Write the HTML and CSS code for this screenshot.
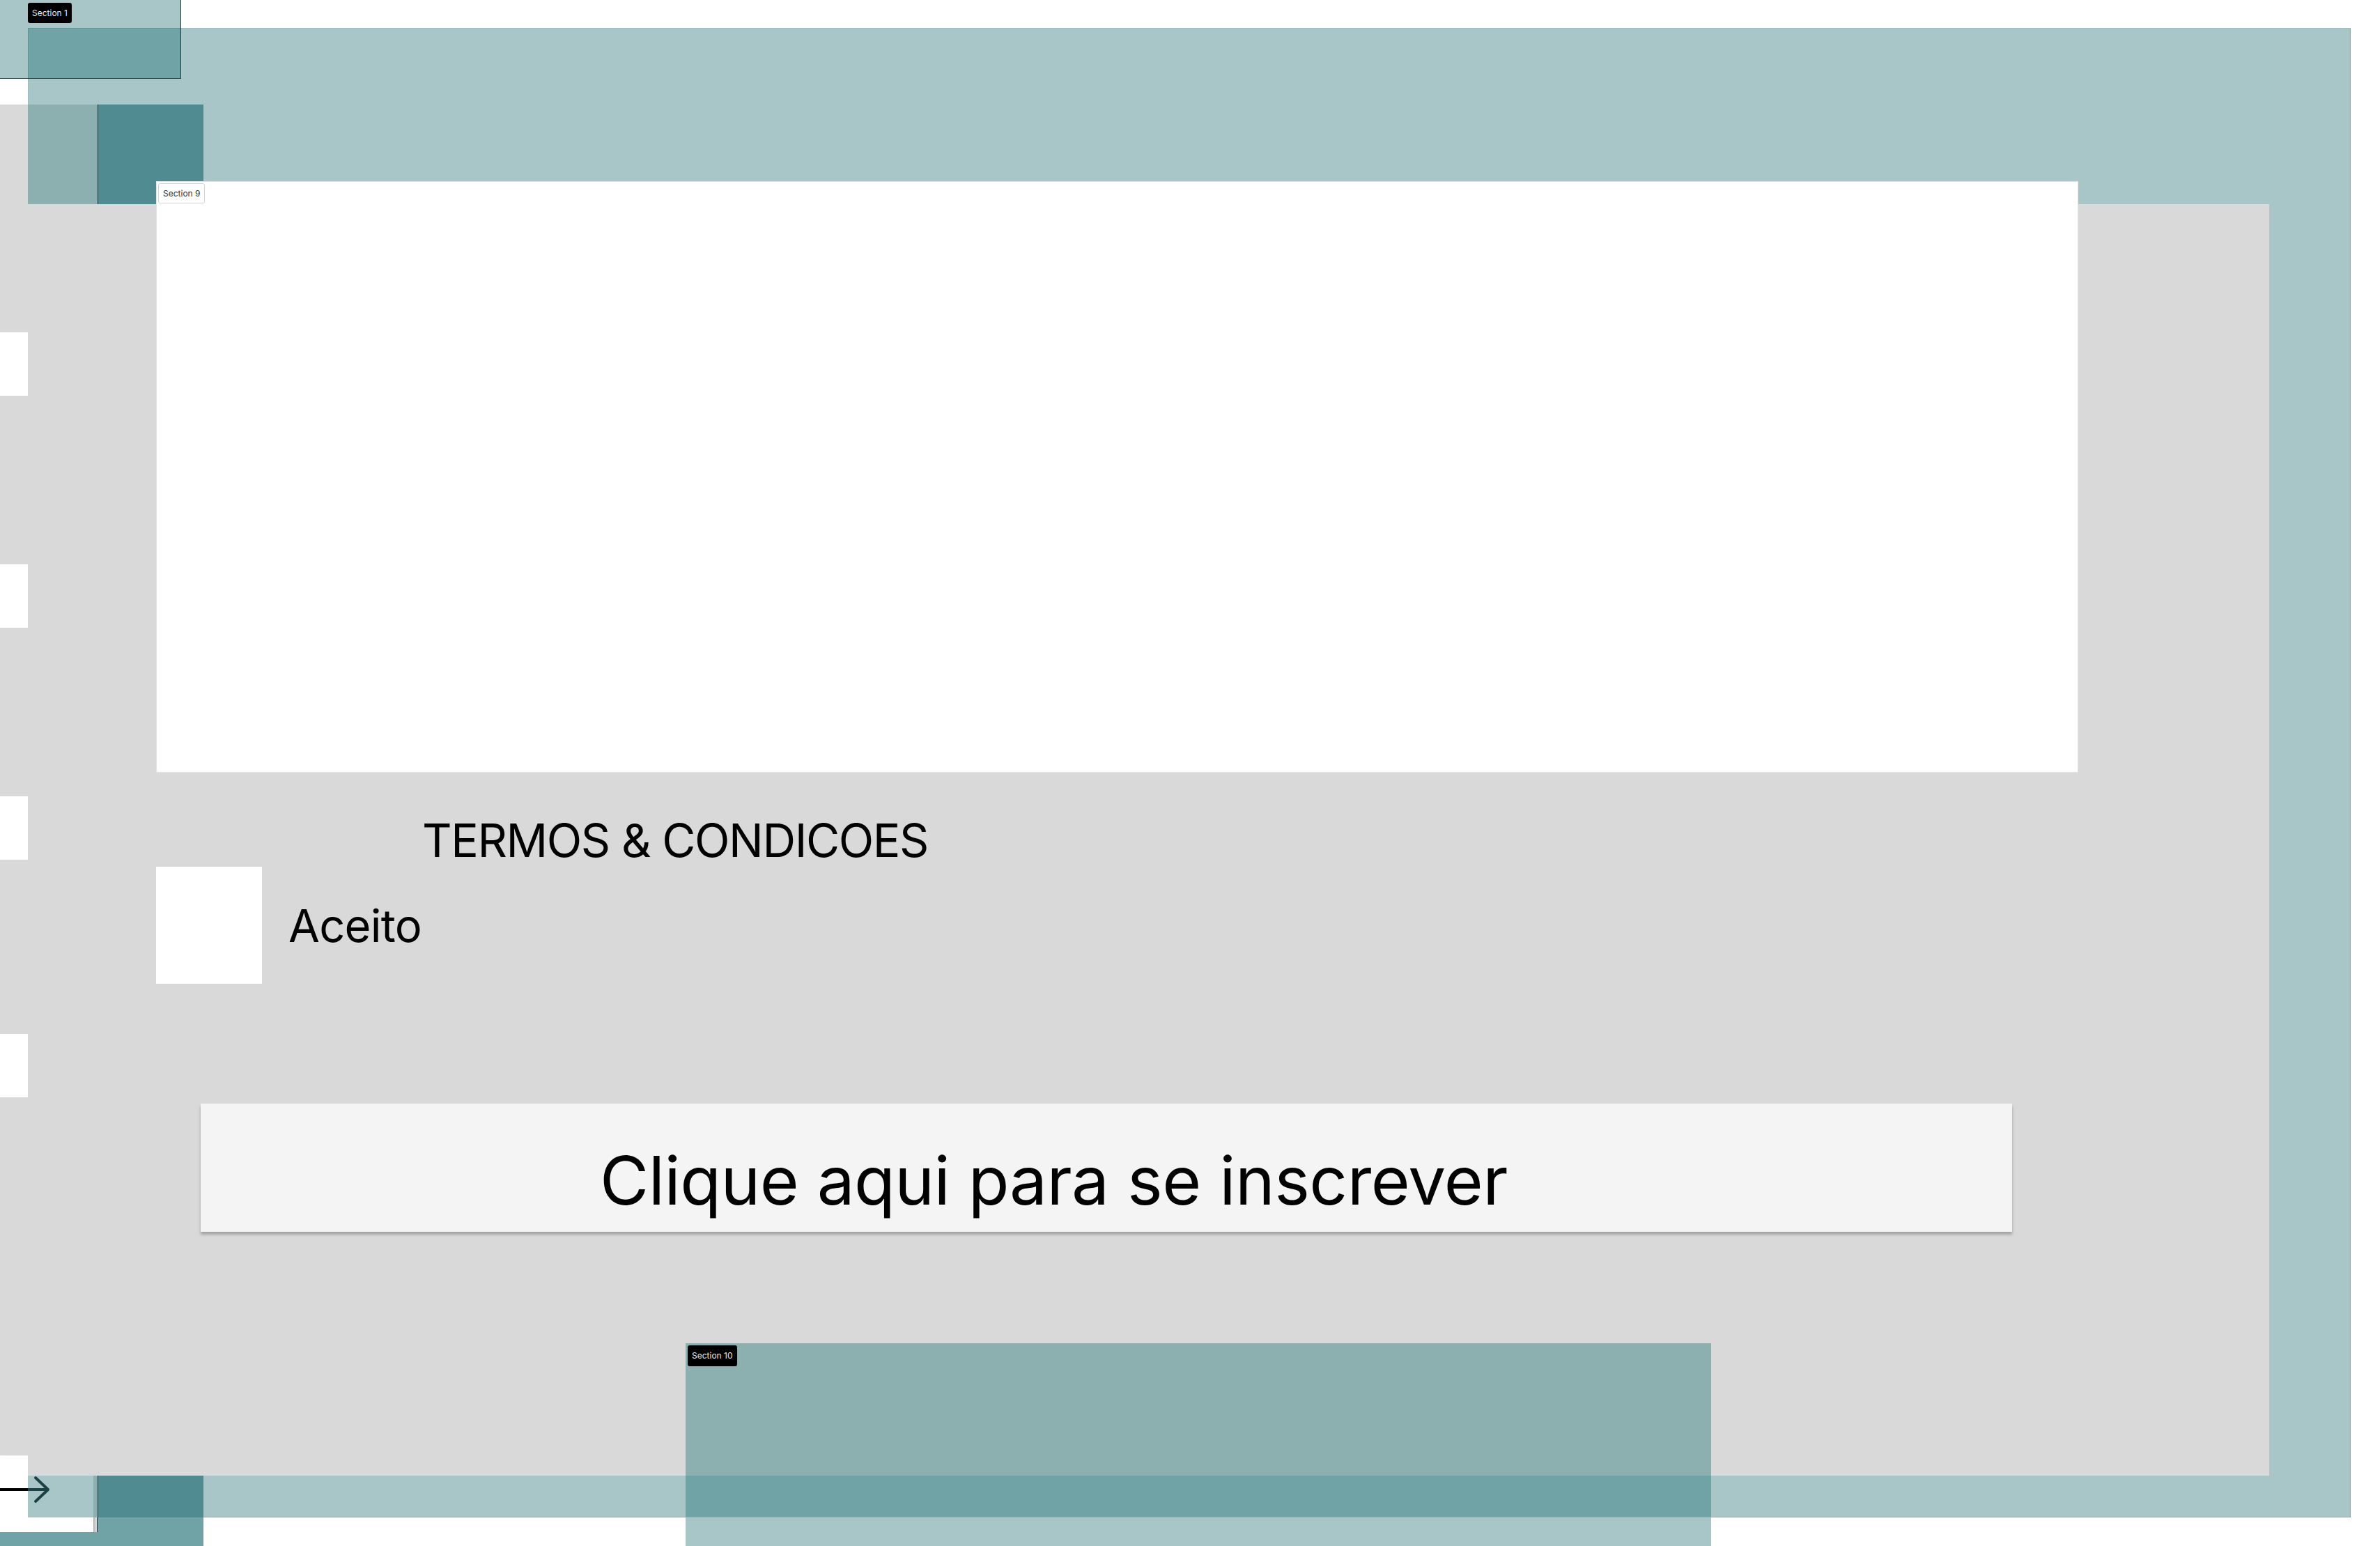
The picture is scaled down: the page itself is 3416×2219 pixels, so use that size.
FILE: index.html
```html
<!DOCTYPE html>
<html lang="pt">
<head>
<meta charset="utf-8">
<title>Termos &amp; Condicoes</title>
<link rel="stylesheet" href="styles.css">
</head>
<body>
<div class="canvas">
  <div class="frame-a"></div>

  <div class="section-one">
    <div class="section-one-overlap"></div>
    <span class="badge badge-dark badge-s1">Section 1</span>
  </div>

  <div class="column-e">
    <div class="column-e-top"></div>
    <div class="column-e-bottom"></div>
  </div>

  <div class="side-panel">
    <div class="side-tint"></div>
    <div class="side-box side-box-1"></div>
    <div class="side-box side-box-2"></div>
    <div class="side-box side-box-3"></div>
    <div class="side-box side-box-4"></div>
    <div class="side-box side-box-last"></div>
  </div>
  <div class="panel-foot"></div>
  <div class="bottom-tint"><div class="bottom-tint-edge"></div></div>
  <svg class="arrow" width="80" height="44" viewBox="0 0 80 44">
    <defs>
      <linearGradient id="arrowInk" gradientUnits="userSpaceOnUse" x1="0" y1="0" x2="80" y2="0">
        <stop offset="0" stop-color="#000"/>
        <stop offset="0.5" stop-color="#000"/>
        <stop offset="0.5" stop-color="#1b4245"/>
        <stop offset="1" stop-color="#1b4245"/>
      </linearGradient>
    </defs>
    <path d="M0 22 H68" stroke="url(#arrowInk)" stroke-width="4" fill="none"/>
    <path d="M51 5 L69 22 L51 39" stroke="url(#arrowInk)" stroke-width="4" fill="none" stroke-linecap="round" stroke-linejoin="round"/>
  </svg>

  <div class="stage">
    <div class="terms-title">TERMOS &amp; CONDICOES</div>
    <div class="accept-row">
      <div class="checkbox"></div>
      <span class="accept-label">Aceito</span>
    </div>
    <div class="signup-btn">Clique aqui para se inscrever</div>
  </div>

  <div class="section-nine">
    <span class="badge badge-light">Section 9</span>
  </div>

  <div class="section-ten">
    <div class="band band-gray"></div>
    <div class="band band-mid"></div>
    <div class="band band-light"></div>
    <span class="badge badge-dark badge-s10">Section 10</span>
  </div>
</div>
</body>
</html>
```

FILE: styles.css
```css
html, body {
  margin: 0;
  padding: 0;
  background: #ffffff;
}

.canvas {
  position: relative;
  width: 3416px;
  height: 2219px;
  overflow: hidden;
  background: #ffffff;
  font-family: "Inter", "Noto Sans", sans-serif;
  color: #000;
}

/* big teal frame */
.frame-a {
  position: absolute;
  left: 40px;
  top: 40px;
  width: 3334px;
  height: 2138px;
  background: #a8c6c8;
  box-shadow: inset 0 1px 0 #9bbcbe, inset 1px 0 0 #9bbcbe, inset -1px 0 0 #8fadaf, inset 0 -1px 0 #8fadaf;
}

/* Section 1 */
.section-one {
  position: absolute;
  left: 0;
  top: 0;
  width: 259px;
  height: 112px;
  background: #a8c6c8;
  border-right: 1px solid #1d3739;
  border-bottom: 1px solid #1d3739;
}
.section-one-overlap {
  position: absolute;
  left: 40px;
  top: 40px;
  right: 0;
  bottom: 0;
  background: #6fa3a6;
  box-shadow: inset 0 1px 0 #5f9396, inset 1px 0 0 #5f9396;
}

/* badges */
.badge {
  position: absolute;
  height: 29px;
  line-height: 29px;
  padding: 0 6px;
  font-size: 12px;
  border-radius: 3px;
  white-space: nowrap;
  box-sizing: border-box;
}
.badge-dark {
  background: #000;
  color: #e8e8e8;
}
.badge-light {
  left: 3px;
  top: 3px;
  background: #fff;
  color: #333;
  border: 1px solid #d4d4d4;
  line-height: 27px;
}
.badge-s1 {
  left: 40px;
  top: 4px;
}
.badge-s10 {
  left: 3px;
  top: 3px;
  height: 30px;
  line-height: 30px;
}

/* dark teal column */
.column-e {
  position: absolute;
  left: 140px;
  top: 150px;
  width: 152px;
  height: 2069px;
  display: flex;
  flex-direction: column;
}
.column-e-top {
  height: 2028px;
  background: #508b91;
  box-shadow: inset 1px 0 0 #1c3a3d;
}
.column-e-bottom {
  flex: 1;
  background: #6fa3a6;
}

/* left side panel */
.side-panel {
  position: absolute;
  left: 0;
  top: 150px;
  width: 140px;
  height: 2049px;
  background: #d9d9d9;
  border-right: 1px solid #1c3a3d;
  display: flex;
  flex-direction: column;
  padding-top: 327px;
  box-sizing: border-box;
}
.side-tint {
  position: absolute;
  left: 40px;
  top: 0;
  width: 100px;
  height: 143px;
  background: #8cafb0;
}
.side-box {
  width: 134px;
  height: 91px;
  background: #fff;
  flex: none;
}
.side-box-2,
.side-box-3 {
  margin-top: 242px;
}
.side-box-4 {
  margin-top: 250px;
}
.side-box-last {
  margin-top: auto;
  height: 111px;
  margin-bottom: -1px;
  box-shadow: 1px 2px 3px rgba(0, 0, 0, 0.3);
}
.panel-foot {
  position: absolute;
  left: 0;
  top: 2199px;
  width: 141px;
  height: 20px;
  background: #6fa3a6;
}
.bottom-tint {
  position: absolute;
  left: 40px;
  top: 2118px;
  width: 94px;
  height: 60px;
  background: #a8c6c8;
}
.bottom-tint-edge {
  position: absolute;
  left: 94px;
  top: 0;
  width: 6px;
  height: 60px;
  background: #8cafb0;
}
.arrow {
  position: absolute;
  left: 0;
  top: 2116px;
}

/* main gray stage */
.stage {
  position: absolute;
  left: 40px;
  top: 293px;
  width: 3217px;
  height: 1825px;
  background: #d9d9d9;
  box-sizing: border-box;
  padding-top: 880px;
  display: flex;
  flex-direction: column;
  align-items: flex-start;
}
.terms-title {
  margin-left: 566px;
  font-size: 66px;
  line-height: 66px;
  letter-spacing: -1.4px;
  white-space: nowrap;
}
.accept-row {
  margin-left: 184px;
  margin-top: 5px;
  display: flex;
  align-items: center;
  gap: 38px;
}
.checkbox {
  width: 152px;
  height: 168px;
  background: #fff;
}
.accept-label {
  font-size: 65px;
  line-height: 65px;
  letter-spacing: -0.7px;
}
.signup-btn {
  margin-left: 248px;
  margin-top: 172px;
  width: 2600px;
  height: 184px;
  box-sizing: border-box;
  padding: 62px 0 0 573px;
  background: #f4f4f4;
  box-shadow: 0 4px 4px rgba(0, 0, 0, 0.25);
  font-size: 96px;
  line-height: 96px;
  letter-spacing: -0.5px;
  white-space: nowrap;
}

/* Section 9 white frame */
.section-nine {
  position: absolute;
  left: 224px;
  top: 260px;
  width: 2759px;
  height: 849px;
  background: #fff;
  box-shadow: inset 0 0 0 1px #e2e2e2;
}

/* Section 10 */
.section-ten {
  position: absolute;
  left: 984px;
  top: 1928px;
  width: 1472px;
  height: 291px;
  display: flex;
  flex-direction: column;
  box-shadow: inset 0 1px 0 #799b9d, inset 1px 0 0 #799b9d, inset -1px 0 0 #799b9d;
}
.band-gray {
  height: 190px;
  background: #8cafb0;
}
.band-mid {
  height: 60px;
  background: #6fa3a6;
  box-shadow: inset 0 -1px 0 #8fadaf;
}
.band-light {
  flex: 1;
  background: #a8c6c8;
}
```
